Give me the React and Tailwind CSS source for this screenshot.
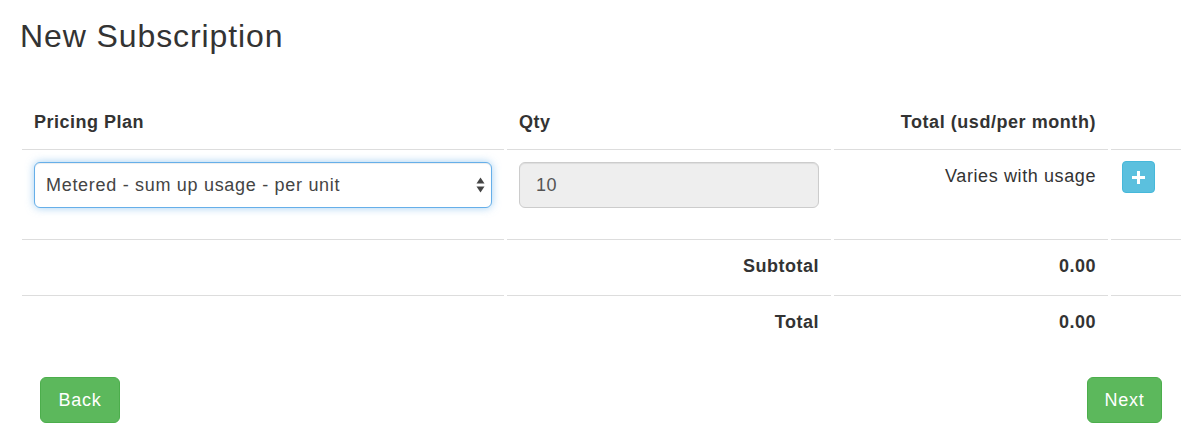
import React from 'react';

const font = { fontFamily: '"Liberation Sans", Arial, sans-serif' };

function SelectArrows() {
  return (
    <svg width="9" height="16" viewBox="0 0 9 16" className="absolute right-[6px] top-1/2 -translate-y-1/2">
      <path d="M4.5 0.5 L8.5 6.5 L0.5 6.5 Z" fill="#444" />
      <path d="M0.5 9.5 L8.5 9.5 L4.5 15.5 Z" fill="#444" />
    </svg>
  );
}

function PlusIcon() {
  return (
    <svg width="13" height="13" viewBox="0 0 13 13">
      <rect x="5" y="0" width="3" height="13" fill="#fff" />
      <rect x="0" y="5" width="13" height="3" fill="#fff" />
    </svg>
  );
}

export default function App() {
  return (
    <div className="w-[1200px] h-[440px] bg-white text-[#333]" style={font}>
      <h3 className="pl-5 pt-5 text-[32px] leading-[33px] font-normal tracking-[0.9px]">New Subscription</h3>

      {/* Plan table */}
      <div className="mt-[43px] ml-[22px] grid grid-cols-[482px_324px_274px_70px] gap-x-[3px] text-[18px] leading-7 tracking-[0.6px]">
        {/* header */}
        <div className="px-3 pt-3 pb-[13px] font-bold tracking-[0.5px]">Pricing Plan</div>
        <div className="px-3 pt-3 pb-[13px] font-bold tracking-[0.5px]">Qty</div>
        <div className="px-3 pt-3 pb-[13px] font-bold tracking-[0.55px] text-right">Total (usd/per month)</div>
        <div />

        {/* plan row */}
        <div className="border-t border-[#ddd] px-3 pt-3 h-[90px]">
          <div className="relative h-[46px] rounded-[6px] border border-[#66afe9] bg-white shadow-[inset_0_1px_1px_rgba(0,0,0,0.075),0_0_8px_rgba(102,175,233,0.6)]">
            <div className="pl-[11px] leading-[44px] text-[#444] tracking-[0.7px]">Metered - sum up usage - per unit</div>
            <SelectArrows />
          </div>
        </div>
        <div className="border-t border-[#ddd] px-3 pt-3 h-[90px]">
          <div className="h-[46px] rounded-[6px] border border-[#ccc] bg-[#eee] pl-4 leading-[44px] text-[#555] shadow-[inset_0_1px_1px_rgba(0,0,0,0.075)]">
            10
          </div>
        </div>
        <div className="border-t border-[#ddd] px-3 pt-3 h-[90px] text-right">Varies with usage</div>
        <div className="border-t border-[#ddd] pl-[11px] pt-[11px] h-[90px]">
          <button className="w-[33px] h-[32px] flex items-center justify-center rounded-[4px] border border-[#46b8da] bg-[#5bc0de]">
            <PlusIcon />
          </button>
        </div>

        {/* subtotal */}
        <div className="border-t border-[#ddd] px-3 pt-3 pb-[15px]" />
        <div className="border-t border-[#ddd] px-3 pt-3 pb-[15px] font-bold tracking-[0.5px] text-right">Subtotal</div>
        <div className="border-t border-[#ddd] px-3 pt-3 pb-[15px] font-bold tracking-[0.5px] text-right">0.00</div>
        <div className="border-t border-[#ddd]" />

        {/* total */}
        <div className="border-t border-[#ddd] px-3 pt-3 pb-[15px]" />
        <div className="border-t border-[#ddd] px-3 pt-3 pb-[15px] font-bold tracking-[0.5px] text-right">Total</div>
        <div className="border-t border-[#ddd] px-3 pt-3 pb-[15px] font-bold tracking-[0.5px] text-right">0.00</div>
        <div className="border-t border-[#ddd]" />
      </div>

      {/* actions */}
      <div className="mt-[26px] pl-10 pr-[38px] flex justify-between">
        <button className="w-[80px] h-[46px] rounded-[6px] border border-[#4cae4c] bg-[#5cb85c] text-white text-[18px] tracking-[0.8px]">Back</button>
        <button className="w-[75px] h-[46px] rounded-[6px] border border-[#4cae4c] bg-[#5cb85c] text-white text-[18px] tracking-[0.8px]">Next</button>
      </div>
    </div>
  );
}
